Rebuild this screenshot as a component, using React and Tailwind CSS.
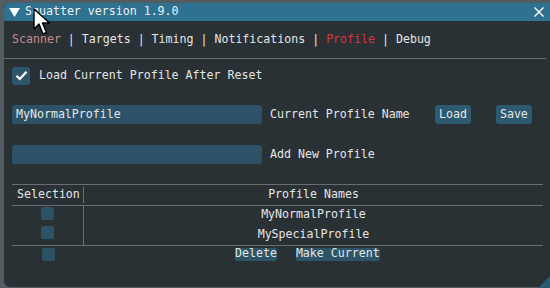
import React from 'react'

const mono = { fontFamily: '"DejaVu Sans Mono", "Liberation Mono", monospace' }

const Box = ({ className = '' }) => (
  <span className={`block h-[13px] w-[13px] rounded-[2px] bg-[#2c5266] ${className}`} />
)

const Cursor = () => (
  <svg className="absolute left-[33px] top-[8px]" width="20" height="28" viewBox="0 0 20 28">
    <path d="M1 1 L1 21 L6 16 L10 26 L13.5 24.5 L9.5 15 L16.5 15 Z" fill="#fff" stroke="#000" strokeWidth="1.4" strokeLinejoin="round" />
  </svg>
)

export default function App() {
  return (
    <div className="relative h-[288px] w-[550px] overflow-hidden bg-[#535c61] text-[11.6px] leading-none text-[#e4e6e7]" style={mono}>
      <div className="ml-[4px] mt-[3px] flex h-[284px] w-[560px] flex-col overflow-hidden rounded-l-[6px] bg-[#2a3135]">
        {/* title bar */}
        <div className="flex h-[18px] shrink-0 items-center bg-[#2f7190] pl-[5px] pr-[19px]">
          <svg width="11" height="9" viewBox="0 0 11 9">
            <path d="M0 0 L11 0 L5.5 9 Z" fill="#fff" />
          </svg>
          <span className="ml-[5px] text-[#eef2f4]">Squatter version 1.9.0</span>
          <span className="flex-1" />
          <svg width="12" height="12" viewBox="0 0 12 12">
            <path d="M1.5 1.5 L10.5 10.5 M10.5 1.5 L1.5 10.5" stroke="#fff" strokeWidth="1.4" />
          </svg>
        </div>

        {/* tabs */}
        <div className="flex h-[37px] shrink-0 items-center whitespace-pre pl-[8px] pt-[1px]">
          <span className="text-[#c98a8c]">Scanner</span>
          <span> | Targets | Timing | Notifications | </span>
          <span className="text-[#d8363e]">Profile</span>
          <span> | Debug</span>
        </div>
        <div className="h-px w-[542px] shrink-0 bg-[#676e72]" />

        {/* reset checkbox */}
        <div className="mt-[7px] flex h-[19px] items-center pl-[8px]">
          <span className="flex h-[18px] w-[18px] items-center justify-center rounded-[3px] bg-[#2e566b]">
            <svg width="13" height="11" viewBox="0 0 13 11">
              <path d="M1.5 5.8 L4.8 9 L11.5 1.8" fill="none" stroke="#fff" strokeWidth="2.2" />
            </svg>
          </span>
          <span className="ml-[9px]">Load Current Profile After Reset</span>
        </div>

        {/* current profile */}
        <div className="mt-[20px] flex h-[19px] items-center pl-[8px]">
          <span className="flex h-[19px] w-[250px] items-center rounded-[3px] bg-[#2d5267] pl-[4px]">MyNormalProfile</span>
          <span className="ml-[8px] w-[165px]">Current Profile Name</span>
          <span className="flex h-[19px] items-center rounded-[3px] bg-[#2e5a6f] px-[4px]">Load</span>
          <span className="ml-[25px] flex h-[19px] items-center rounded-[3px] bg-[#2e5a6f] px-[4px]">Save</span>
        </div>

        {/* new profile */}
        <div className="mt-[21px] flex h-[19px] items-center pl-[8px]">
          <span className="h-[19px] w-[250px] rounded-[3px] bg-[#2d5267]" />
          <span className="ml-[8px]">Add New Profile</span>
        </div>

        {/* table */}
        <div className="ml-[8px] mt-[20px] w-[531px]">
          <div className="h-px bg-[#676e72]" />
          <div className="flex h-[20px] items-center">
            <span className="flex h-[16px] w-[72px] items-center border-r border-[#676e72] pl-[5px]">Selection</span>
            <span className="flex-1 text-center">Profile Names</span>
          </div>
          <div className="h-px bg-[#676e72]" />
          <div className="flex h-[39px]">
            <div className="flex w-[72px] flex-col items-center gap-[6px] border-r border-[#676e72] pt-[1px]">
              <Box />
              <Box />
            </div>
            <div className="flex flex-1 flex-col items-center">
              <span className="flex h-[18px] items-center">MyNormalProfile</span>
              <span className="flex h-[21px] items-center">MySpecialProfile</span>
            </div>
          </div>
          <div className="h-px bg-[#676e72]" />
          <div className="flex h-[15px] items-center pt-[1px]">
            <span className="flex w-[72px] justify-center"><Box /></span>
            <span className="ml-[151px] flex h-[13px] items-center rounded-[2px] bg-[#2d5568]">Delete</span>
            <span className="ml-[19px] flex h-[13px] items-center rounded-[2px] bg-[#2d5568]">Make Current</span>
          </div>
        </div>
      </div>

      {/* resize grip */}
      <svg className="absolute bottom-0 right-0" width="14" height="12" viewBox="0 0 14 12">
        <path d="M14 0 L14 12 L2 12 Z" fill="#2c5a70" />
      </svg>
      <Cursor />
    </div>
  )
}
